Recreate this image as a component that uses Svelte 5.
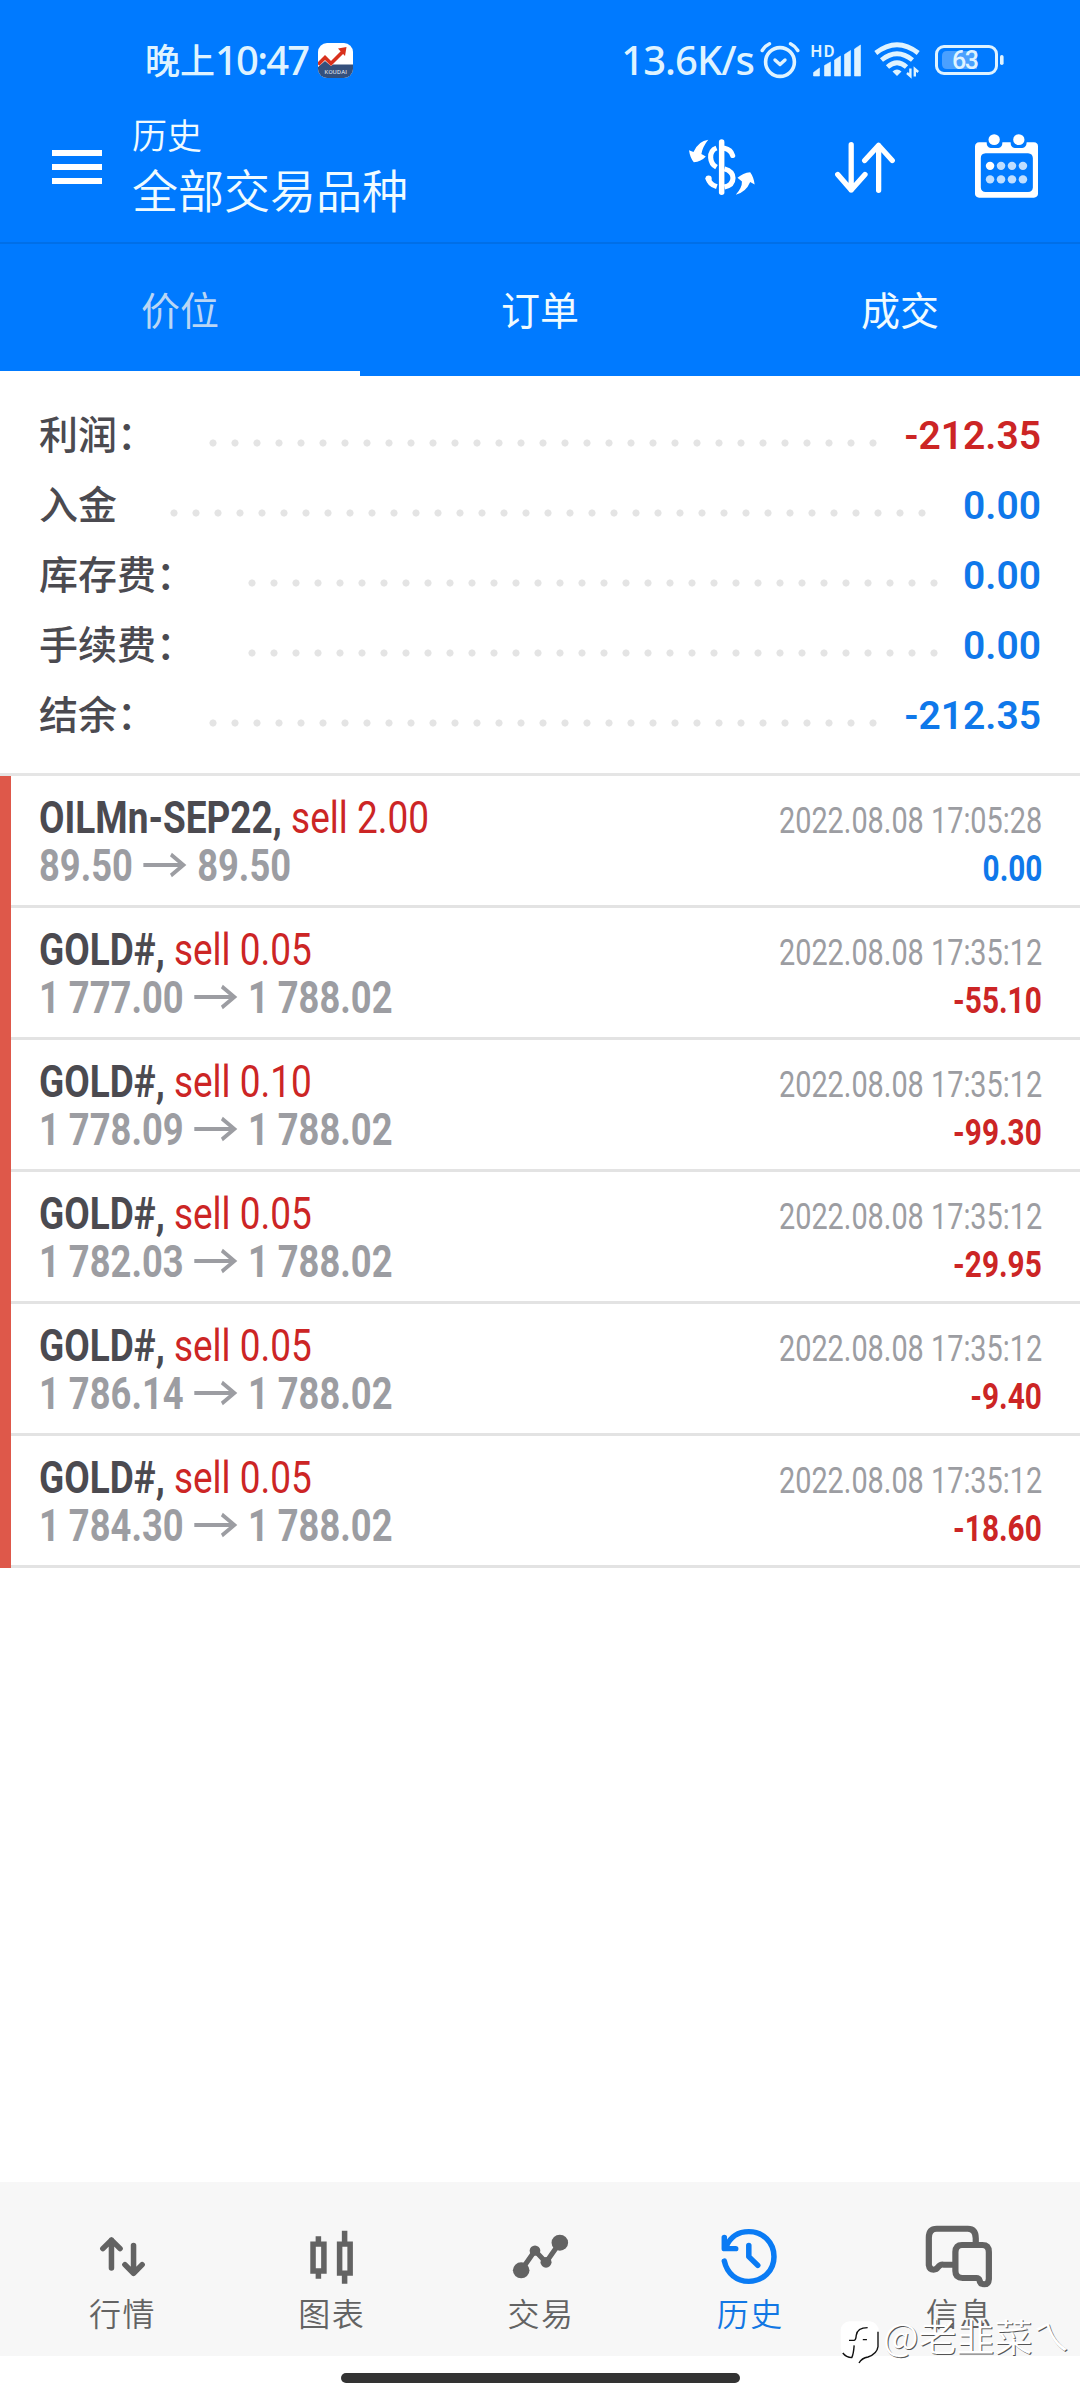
<script>
  const tabs = ['价位', '订单', '成交'];
  const summary = [
    { label: '利润：', value: '-212.35', dots: 31, loss: true },
    { label: '入金', value: '0.00', dots: 35 },
    { label: '库存费：', value: '0.00', dots: 32 },
    { label: '手续费：', value: '0.00', dots: 32 },
    { label: '结余：', value: '-212.35', dots: 31 }
  ];
  const deals = [
    { symbol: 'OILMn-SEP22,', side: 'sell 2.00', from: '89.50', to: '89.50', time: '2022.08.08 17:05:28', profit: '0.00' },
    { symbol: 'GOLD#,', side: 'sell 0.05', from: '1 777.00', to: '1 788.02', time: '2022.08.08 17:35:12', profit: '-55.10' },
    { symbol: 'GOLD#,', side: 'sell 0.10', from: '1 778.09', to: '1 788.02', time: '2022.08.08 17:35:12', profit: '-99.30' },
    { symbol: 'GOLD#,', side: 'sell 0.05', from: '1 782.03', to: '1 788.02', time: '2022.08.08 17:35:12', profit: '-29.95' },
    { symbol: 'GOLD#,', side: 'sell 0.05', from: '1 786.14', to: '1 788.02', time: '2022.08.08 17:35:12', profit: '-9.40' },
    { symbol: 'GOLD#,', side: 'sell 0.05', from: '1 784.30', to: '1 788.02', time: '2022.08.08 17:35:12', profit: '-18.60' }
  ];
</script>

<div class="screen">
  <header>
    <div class="status">
      <div class="clock">
        <span class="cjk">晚上</span><span class="num">10:47</span>
        <svg class="app" viewBox="0 0 35 35">
          <defs><clipPath id="r"><rect width="35" height="35" rx="9" /></clipPath></defs>
          <g clip-path="url(#r)">
            <rect width="35" height="35" fill="#fff" />
            <path d="M0 24 L7 18 L13 23 L15 21.5 H35 V35 H0Z" fill="#34507c" />
            <path d="M0 21.5 L7 14.5 L13 20.5 L25 8.5" fill="none" stroke="#d8301c" stroke-width="3.6" />
            <path d="M20 5.5 L28.5 4 L27 13Z" fill="#d8301c" />
            <text x="6.5" y="30.5" font-size="6" textLength="22.5" fill="#e6ecf5">KOUDAI</text>
          </g>
        </svg>
      </div>
      <div class="indicators">
        <span class="speed">13.6K/s</span>
        <svg class="alarm" viewBox="0 0 40 36" fill="none" stroke="#dff3ff" stroke-linecap="round">
          <circle cx="20" cy="20" r="14.4" stroke-width="3.6" />
          <path d="M2.2 8.5 Q5 4 9.5 1.8 M30.5 1.8 Q35 4 37.8 8.5" stroke-width="3.4" />
          <path d="M15 18 L20 22.5 L25 18" stroke-width="3.4" stroke-linejoin="round" />
        </svg>
        <svg class="signal" viewBox="0 0 50 33" fill="#dff3ff">
          <text x="-.6" y="12.6" font-size="16.5" font-weight="600" textLength="24">HD</text>
          <path d="M2.5 32 V28.5 L8.5 24 V32Z M13.5 32 V21.5 L19.5 18 V32Z M23.5 32 V16 L29.5 12 V32Z M33.5 32 V10.5 L39.5 6.5 V32Z M43.5 32 V5 L49.5 1 V32Z" stroke="#dff3ff" stroke-width=".6" stroke-linejoin="round" />
        </svg>
        <svg class="wifi" viewBox="0 0 46 36" fill="none" stroke="#dff3ff" stroke-width="4.8">
          <path d="M1.8 11 Q23 -5.500 44.200 11 M7.500 18 Q23 5.500 38.500 18 M13.500 25 Q23 16.500 32.500 25" />
          <path d="M18.5 29.5 Q23 25.5 27.5 29.5 L23 34Z" fill="#dff3ff" stroke="none" />
          <path d="M36.4 26.5 V34 L33 31 M40.8 34.5 V27 L44.2 30" stroke-width="2.4" />
        </svg>
        <svg class="battery" viewBox="0 0 69 30">
          <rect x="1.5" y="1.5" width="60" height="27" rx="7.5" fill="none" stroke="#dff3ff" stroke-width="3" />
          <path d="M12 6 H42 V24 H12 Q7 24 7 19 V11 Q7 6 12 6Z" fill="#4aa0ff" />
          <rect x="65" y="10" width="3.6" height="10" rx="1.8" fill="#dff3ff" />
          <text x="17" y="24" font-size="25" font-weight="500" textLength="27" fill="#dff3ff">63</text>
        </svg>
      </div>
    </div>

    <div class="bar">
      <div class="burger"><i></i><i></i><i></i></div>
      <div class="titles">
        <div class="small">历史</div>
        <div class="big">全部交易品种</div>
      </div>
      <div class="actions">
        <svg class="swap" viewBox="433 416 192 169" preserveAspectRatio="none" fill="none" stroke="#fff">
          <path d="M528 425 V577" stroke-width="16" stroke-linecap="round" />
          <path d="M536 444 Q555 448 560 466" stroke-width="15" stroke-linecap="round" />
          <path d="M513 443 Q495 450 496 472 Q497 492 513 501" stroke-width="15" />
          <path d="M536 506 Q561 513 561 534 Q561 556 536 561" stroke-width="15" />
          <path d="M488 532 Q492 553 514 560" stroke-width="15" />
          <circle cx="490" cy="535" r="9" fill="#fff" stroke="none" />
          <path d="M489 418 Q461 421 446 455 L433 450 Q436 473 447 486 Q468 485 482 469 L469 461 Q472 440 489 418Z M569 584 Q588 562 587 544 L574 533 Q590 518 611 516 Q621 530 624 553 L611 546 Q598 578 569 584Z" fill="#fff" stroke="none" />
        </svg>
        <svg class="sort" viewBox="856 425 176 152" preserveAspectRatio="none" fill="none" stroke="#fff" stroke-width="15.5" stroke-linecap="round" stroke-linejoin="round">
          <path d="M903.5 433 V568 M864 522 L903.5 568 L944 522 M984 569 V435 M943 480 L984 435 L1024 480" />
        </svg>
        <svg class="calendar" viewBox="1263 401 184 193" preserveAspectRatio="none">
          <path fill="#fff" fill-rule="evenodd" d="M1275 426 H1297 Q1297 442 1309 443 H1331 Q1343 442 1343 426 H1367 Q1367 442 1379 443 H1401 Q1413 442 1414 426 H1435 Q1447 427 1447 438 V582 Q1446 592 1435 593 H1275 Q1264 592 1263 582 V438 Q1264 427 1275 426Z M1294 459 Q1280 460 1280 473 V562 Q1281 575 1294 576 H1418 Q1431 575 1432 562 V473 Q1431 460 1418 459Z" />
          <circle cx="1319" cy="418" r="16.5" fill="#fff" /><circle cx="1391" cy="418" r="16.5" fill="#fff" />
          {#each [0, 1, 2, 3, 4, 5, 6, 7] as n}
            <circle cx={1307 + (n % 4) * 32} cy={n < 4 ? 497 : 538} r="12.5" fill={n ? '#bfdeff' : '#fff'} />
          {/each}
        </svg>
      </div>
    </div>

    <nav class="tabs">
      {#each tabs as tab, i}
        <div class="tab" class:active={i === 0}>{tab}</div>
      {/each}
    </nav>
  </header>

  <section class="summary">
    {#each summary as row}
      <div class="line">
        <span class="label">{row.label}</span>
        <span class="dots" style="width: {row.dots * 22}px"></span>
        <span class="value" class:loss={row.loss}>{row.value}</span>
      </div>
    {/each}
  </section>

  <section class="deals">
    {#each deals as deal}
      <div class="deal">
        <div class="left">
          <div class="row"><b class="symbol">{deal.symbol}</b>&nbsp;<span class="side">{deal.side}</span></div>
          <div class="row prices">{deal.from}<svg class="arrow" viewBox="0 0 51 24" preserveAspectRatio="none"><path d="M0 12 H48 M33 1.5 L48 12 L33 22.5" fill="none" stroke="#9c9da2" stroke-width="4" /></svg>{deal.to}</div>
        </div>
        <div class="right">
          <div class="time">{deal.time}</div>
          <div class="profit" class:loss={deal.profit !== '0.00'}>{deal.profit}</div>
        </div>
      </div>
    {/each}
  </section>

  <footer>
    <div class="item">
      <svg viewBox="254 196 200 180" preserveAspectRatio="none" fill="none" stroke="#636363" stroke-width="16" stroke-linecap="round" stroke-linejoin="round">
        <path d="M322 325 V241 M297 267 L322 241 L347 267 M386 257 V341 M361 315 L386 341 L411 315" />
      </svg>
      <span>行情</span>
    </div>
    <div class="item">
      <svg viewBox="861 196 200 180" preserveAspectRatio="none" fill="none" stroke="#636363" stroke-width="16">
        <path d="M923 230 V254 M923 334 V357 M907.5 253.5 H939 V334 H907.5Z M999 213 V254 M999 340 V372 M984.5 253.5 H1015 V340.5 H984.5Z" />
      </svg>
      <span>图表</span>
    </div>
    <div class="item">
      <svg viewBox="1468 196 200 180" preserveAspectRatio="none" fill="#636363">
        <path d="M1512 332 L1552 273 L1584 308 L1624 249" fill="none" stroke="#636363" stroke-width="15" stroke-linejoin="round" />
        <circle cx="1512" cy="332" r="24" /><circle cx="1552" cy="273" r="15.5" /><circle cx="1584" cy="308" r="16" /><circle cx="1624" cy="249" r="24" />
      </svg>
      <span>交易</span>
    </div>
    <div class="item current">
      <svg viewBox="508 196 200 180" preserveAspectRatio="none" fill="none" stroke="#0a7bf4" stroke-width="16" stroke-linecap="round" stroke-linejoin="round">
        <path d="M535 304 C543 342 571 365 606 365 C648 365 679 332 679 291 C679 249 648 216 606 216 C575 216 552 233 540 261 M535 233 V267 H568 M606 257 V291 L632 317" />
      </svg>
      <span>历史</span>
    </div>
    <div class="item">
      <svg viewBox="1113 196 200 190" class="chat" preserveAspectRatio="none" fill="none" stroke="#636363" stroke-width="18" stroke-linejoin="round">
        <path d="M1263 250 V236 Q1263 207 1240 207 H1150 Q1127 207 1127 234 V316 Q1129 330 1141 330 Q1149 330 1153 323 Q1160 314 1169 315 H1201" />
        <path d="M1223 256 H1282 Q1301 256 1301 277 V358 Q1300 374 1288 374 Q1275 374 1274 362 Q1272 355 1265 355 H1225 Q1204 355 1204 334 V277 Q1205 256 1223 256Z" />
      </svg>
      <span>信息</span>
    </div>
    <div class="mark">
      <svg viewBox="868 480 110 132" preserveAspectRatio="none">
        <path d="M895 484 H955 Q980 488 980 515 V560 Q977 583 950 592 L922 610 Q924 598 930 592 H890 Q870 585 870 560 V510 Q872 488 895 484Z" fill="#fff" />
        <path d="M978 515 V560 Q975 582 949 591 Q931 594 923 609 M894 541 H909 Q914 540 915 526 Q918 503 948 503 M934 539 H946 M909 556 Q907 583 902 593 Q886 592 876 579" fill="none" stroke="#111" stroke-width="4" />
      </svg>
      <span>@老韭菜ㄟ</span>
    </div>
  </footer>
  <div class="gesture"><i></i></div>
</div>

<style>
  :global(body) { margin: 0; background: #fff; }
  .screen {
    width: 1080px; height: 2400px; display: flex; flex-direction: column; background: #fff;
    font-family: Roboto, "Noto Sans CJK SC", sans-serif; overflow: hidden;
  }
  svg { display: block; flex: none; overflow: visible; }
  header { background: #007aff; color: #f0fbff; height: 376px; display: flex; flex-direction: column; }

  .status { height: 84px; padding: 35px 76px 0 145px; box-sizing: border-box; display: flex; justify-content: space-between; color: #dff3ff; }
  .clock, .indicators { display: flex; align-items: center; height: 50px; }
  .cjk { font: 500 35px/48px "Noto Sans CJK SC", sans-serif; margin-top: -3px; }
  .num { font: 500 40px/48px "Noto Sans", sans-serif; letter-spacing: -1.8px; width: 103px; }
  .app { width: 35px; height: 35px; }
  .speed { font: 500 40px/48px "Noto Sans", sans-serif; letter-spacing: -1px; margin-right: 6px; }
  .alarm { width: 40px; height: 36px; }
  .signal { width: 50px; height: 33px; margin-left: 11px; }
  .wifi { width: 46px; height: 36px; margin-left: 13px; }
  .battery { width: 69px; height: 30px; margin-left: 15px; }

  .bar { height: 158px; display: flex; align-items: flex-start; padding: 0 42px 0 52px; border-bottom: 2px solid #006fe8; }
  .burger { width: 50px; margin-top: 66px; display: flex; flex-direction: column; gap: 8px; }
  .burger i { height: 6px; background: #fff; }
  .titles { margin: 25px 0 0 30px; font-family: "Noto Sans CJK SC", sans-serif; font-weight: 350; }
  .small { font-size: 35px; line-height: 50px; }
  .big { font-size: 46px; line-height: 58px; }
  .actions { margin-left: auto; display: flex; align-items: flex-start; }
  .swap { width: 66px; height: 56px; margin-top: 55px; }
  .sort { width: 60px; height: 51px; margin: 58px 0 0 80px; }
  .calendar { width: 63px; height: 64px; margin: 50px 0 0 80px; }

  .tabs { flex: 1; display: flex; font: 400 39px/128px "Noto Sans CJK SC", sans-serif; }
  .tab { flex: 1; text-align: center; box-sizing: border-box; height: 132px; }
  .tab.active { color: #b9d6f5; border-bottom: 5.5px solid #fff; }

  .summary { padding: 24px 39px 23px; border-bottom: 3px solid #e5e5e5; }
  .line { height: 70px; display: flex; align-items: center; }
  .label { font: 500 39px/70px "Noto Sans CJK SC", sans-serif; color: #4b4a50; white-space: nowrap; margin-top: -6px; }
  .dots { margin-left: 53px; height: 22px; margin-top: 15px; background: radial-gradient(circle at 4px 11px, #e4e4e4 3.2px, transparent 3.9px) 0 0 / 22px 22px; }
  .value { margin: 2px 0 0 auto; font-size: 39px; font-weight: 600; color: #0f78ea; }
  .loss.loss { color: #cc2525; }

  .deals { border-left: 11px solid #de584a; height: 792px; }
  .deal { height: 132px; box-sizing: border-box; border-bottom: 3px solid #e3e3e3; padding: 19px 38px 0 28px; display: flex; justify-content: space-between; }
  .left, .right { white-space: nowrap; line-height: 48px; width: 0; }
  .left { font-size: 43.5px; }
  .row { width: max-content; height: 48px; transform: scaleX(.85); transform-origin: left; }
  .symbol { color: #4b4a50; }
  .side { color: #cc2525; }
  .row.prices { color: #9c9da2; font-weight: 700; transform: scaleX(.835); }
  .arrow { display: inline-block; width: 51px; height: 24px; margin: 0 13px; vertical-align: 4px; }
  .right { padding-top: 2px; display: flex; flex-direction: column; align-items: flex-end; font-size: 36.5px; }
  .time { color: #9c9da2; transform: scaleX(.79); transform-origin: right; }
  .profit { color: #0f78ea; font-weight: 700; transform: scaleX(.815); transform-origin: right; }

  footer { margin-top: auto; position: relative; height: 174px; background: #f7f7f7; display: flex; padding: 0 16px 0 18px; }
  .item { flex: 1; display: flex; flex-direction: column; align-items: center; color: #636363; font: 350 32px/44px "Noto Sans CJK SC", sans-serif; letter-spacing: 1.5px; }
  .item svg { width: 69px; height: 60px; margin: 43px 0 5px -1px; }
  .item .chat { height: 63.3px; margin-bottom: 1.7px; }
  .current { color: #1277e4; }
  .mark { position: absolute; left: 840px; top: 131px; display: flex; align-items: flex-start; color: #fff; font: 350 38px/46px "Noto Sans CJK TC", sans-serif; text-shadow: 1px 1px 0 #555; white-space: nowrap; }
  .mark span { margin-top: -1px; }
  .mark svg { width: 38px; height: 44px; margin: 7px 5px 0 0; }
  .gesture { height: 44px; display: flex; justify-content: center; align-items: center; }
  .gesture i { width: 399px; height: 10px; border-radius: 5px; background: #333; }
</style>
